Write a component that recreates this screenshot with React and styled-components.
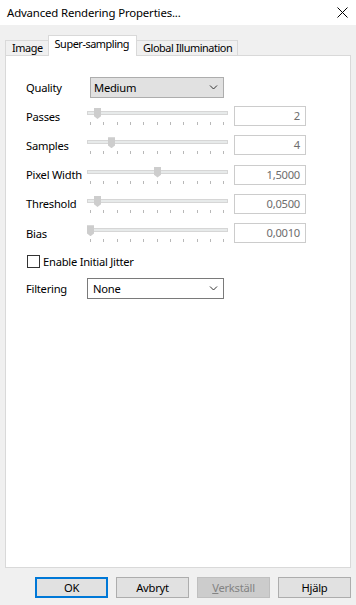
import React from "react";
import styled, { createGlobalStyle } from "styled-components";

const GlobalStyle = createGlobalStyle`
  html, body {
    margin: 0;
    padding: 0;
  }
  body {
    font-family: "Noto Sans", "Open Sans", sans-serif;
    font-size: 11.2px;
    letter-spacing: -0.25px;
    color: #000;
  }
`;

const Window = styled.div`
  width: 356px;
  height: 605px;
  display: flex;
  flex-direction: column;
  background: #f0f0f0;
`;

const TitleBar = styled.div`
  height: 25px;
  flex: none;
  background: #fff;
  display: flex;
  align-items: center;
  justify-content: space-between;
  padding: 0 8px 0 7px;
`;

const Title = styled.span`
  font-size: 11.4px;
  letter-spacing: -0.15px;
  line-height: 1;
`;

const Body = styled.div`
  flex: 1;
  display: flex;
  flex-direction: column;
  padding: 10px 5px 7px;
  min-height: 0;
`;

const TabStrip = styled.div`
  display: flex;
  align-items: flex-end;
  height: 21px;
  margin-bottom: -1px;
  position: relative;
  z-index: 1;
`;

const Tab = styled.div`
  box-sizing: border-box;
  background: ${(p) => (p.$active ? "#fff" : "#f0f0f0")};
  border: 1px solid #d9d9d9;
  border-bottom: none;
  height: ${(p) => (p.$active ? "21px" : "15px")};
  margin: ${(p) => (p.$active ? "0 -1px 0 -1px" : "0 0 1px 0")};
  padding: ${(p) => (p.$active ? "1px 7px 0 6px" : "0 5px 0 6px")};
  position: relative;
  z-index: ${(p) => (p.$active ? 2 : 1)};
  font-size: 10.9px;
  letter-spacing: -0.45px;
  line-height: 14px;
  white-space: nowrap;
`;

const Panel = styled.div`
  flex: 1;
  background: #fff;
  border: 1px solid #d9d9d9;
  padding: 21px 0 0 20px;
  display: flex;
  flex-direction: column;
`;

const SelectRow = styled.div`
  display: grid;
  grid-template-columns: ${(p) => p.$labelWidth}px ${(p) => p.$selectWidth}px;
  align-items: center;
  height: 21px;
  margin-top: ${(p) => p.$top || 0}px;
`;

const Label = styled.span`
  white-space: nowrap;
`;

const Select = styled.div`
  box-sizing: border-box;
  height: 21px;
  display: flex;
  align-items: center;
  justify-content: space-between;
  background: ${(p) => (p.$flat ? "#fff" : "#e1e1e1")};
  border: 1px solid ${(p) => (p.$flat ? "#7a7a7a" : "#adadad")};
  padding: 0 5px 0 ${(p) => (p.$flat ? 5 : 3)}px;
`;

const SliderList = styled.div`
  display: flex;
  flex-direction: column;
  gap: 9.3px;
  margin-top: 8px;
`;

const SliderRow = styled.div`
  display: grid;
  grid-template-columns: 61px 141px 78px;
  height: 20px;
  align-items: center;
`;

const Slider = styled.div`
  position: relative;
  align-self: stretch;
  display: flex;
  flex-direction: column;
  padding-top: 5px;
`;

const Track = styled.div`
  box-sizing: border-box;
  height: 4px;
  background: #e7eaea;
  border: 1px solid #d6d6d6;
`;

const Ticks = styled.div`
  display: flex;
  justify-content: space-between;
  margin: 7px 3.5px 0 3px;
`;

const Tick = styled.span`
  width: 1px;
  height: 3px;
  background: #b8b8b8;
`;

const Thumb = styled.div`
  position: absolute;
  top: 2px;
  width: 7px;
  height: 11px;
  background: #cdcdcd;
  clip-path: polygon(0 0, 100% 0, 100% 75%, 50% 100%, 0 75%);
`;

const Field = styled.div`
  box-sizing: border-box;
  height: 20px;
  margin-left: 6px;
  border: 1px solid #cccccc;
  background: #fff;
  color: #6d6d6d;
  text-align: right;
  padding-right: 5px;
  line-height: 18px;
`;

const CheckRow = styled.label`
  display: flex;
  align-items: center;
  gap: 3px;
  margin: 12px 0 0 1px;
  height: 13px;
`;

const Box = styled.span`
  box-sizing: border-box;
  width: 13px;
  height: 13px;
  border: 1px solid #333;
  background: #fff;
`;

const ButtonRow = styled.div`
  display: flex;
  justify-content: flex-end;
  gap: 8px;
  margin-top: 9px;
`;

const Button = styled.button`
  box-sizing: border-box;
  width: 73px;
  height: 21px;
  font-family: inherit;
  font-size: 11.2px;
  letter-spacing: -0.25px;
  padding: 0;
  color: ${(p) => (p.disabled ? "#838383" : "#000")};
  background: ${(p) => (p.disabled ? "#cccccc" : "#e1e1e1")};
  border: ${(p) =>
    p.$default ? "2px solid #0078d7" : p.disabled ? "1px solid #bfbfbf" : "1px solid #adadad"};
`;

const Chevron = () => (
  <svg width="9" height="5" viewBox="0 0 9 5">
    <path d="M1 0.5 L4.5 4 L8 0.5" fill="none" stroke="#333" strokeWidth="1" />
  </svg>
);

const sliders = [
  { label: "Passes", pos: 0.053, value: "2" },
  { label: "Samples", pos: 0.155, value: "4" },
  { label: "Pixel Width", pos: 0.5, value: "1,5000" },
  { label: "Threshold", pos: 0.053, value: "0,0500" },
  { label: "Bias", pos: 0, value: "0,0010" },
];

export default function App() {
  return (
    <Window>
      <GlobalStyle />
      <TitleBar>
        <Title>Advanced Rendering Properties...</Title>
        <svg width="11" height="11" viewBox="0 0 11 11">
          <path d="M0.5 0.5 L10.5 10.5 M10.5 0.5 L0.5 10.5" stroke="#000" strokeWidth="1" />
        </svg>
      </TitleBar>
      <Body>
        <TabStrip>
          <Tab>Image</Tab>
          <Tab $active>Super-sampling</Tab>
          <Tab>Global Illumination</Tab>
        </TabStrip>
        <Panel>
          <SelectRow $labelWidth={64} $selectWidth={134}>
            <Label>Quality</Label>
            <Select>
              <span>Medium</span>
              <Chevron />
            </Select>
          </SelectRow>
          <SliderList>
            {sliders.map((s) => (
              <SliderRow key={s.label}>
                <Label>{s.label}</Label>
                <Slider>
                  <Track />
                  <Ticks>
                    {Array.from({ length: 11 }).map((_, i) => (
                      <Tick key={i} />
                    ))}
                  </Ticks>
                  <Thumb style={{ left: Math.round(s.pos * 134) }} />
                </Slider>
                <Field>{s.value}</Field>
              </SliderRow>
            ))}
          </SliderList>
          <CheckRow>
            <Box />
            <span>Enable Initial Jitter</span>
          </CheckRow>
          <SelectRow $labelWidth={61} $selectWidth={137} $top={10}>
            <Label>Filtering</Label>
            <Select $flat>
              <span>None</span>
              <Chevron />
            </Select>
          </SelectRow>
        </Panel>
        <ButtonRow>
          <Button $default>OK</Button>
          <Button>Avbryt</Button>
          <Button disabled>
            <u>V</u>erkställ
          </Button>
          <Button>Hjälp</Button>
        </ButtonRow>
      </Body>
    </Window>
  );
}
